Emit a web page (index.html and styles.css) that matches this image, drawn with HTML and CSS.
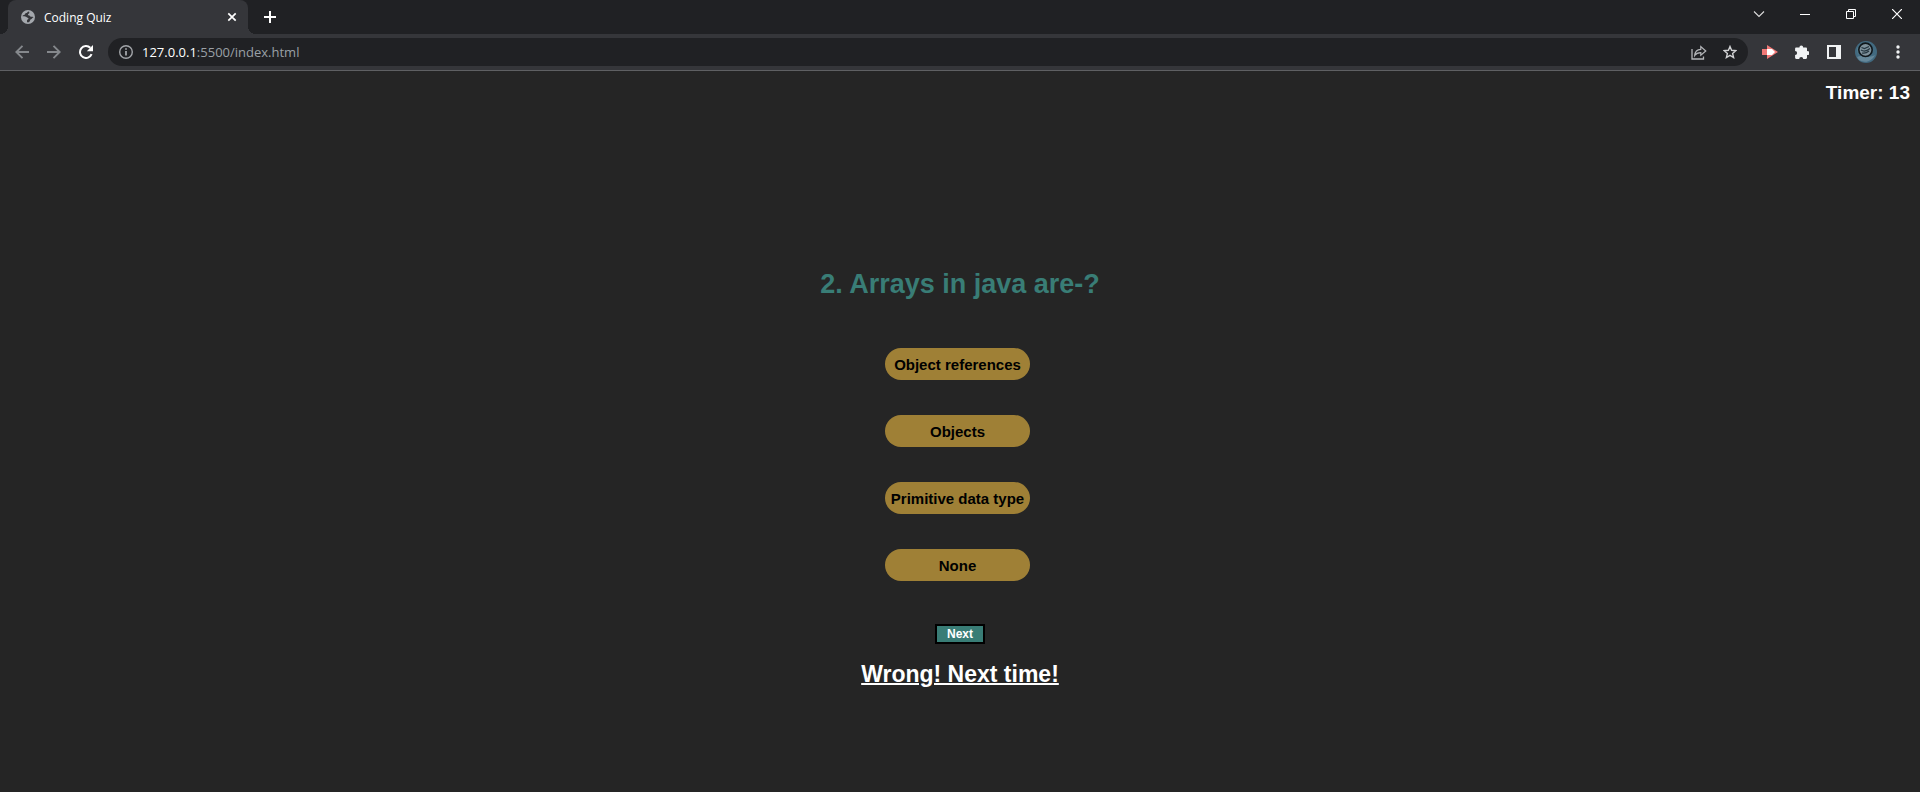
FILE: index.html
```html
<!DOCTYPE html>
<html lang="en">
<head>
<meta charset="utf-8">
<title>Coding Quiz</title>
<link rel="stylesheet" href="styles.css">
</head>
<body>
<header class="browser">
  <div class="tab-strip">
    <div class="tab">
      <svg class="globe" width="14" height="14" viewBox="0 0 14 14"><circle cx="7" cy="7" r="7" fill="#a4a8ad"/><path d="M8 1.4c-2 .2-1.6 1.6-3 1.7-1 .1-.5 1.5-1.5 1.7-.8.2-1.7.6-2 1.4 1.6-.1 3.3 0 4 .9.5.8 1.9.6 2 1.5 0 1-1.5.8-1.5 1.8v1.8c2.500.4 3-1.200 3.200-2.300.2-.9 1.300-.6 1.800-1.500.4-.8 1-.7 1.600-.9-.3-.9-1.300-.9-2.200-.8-1.300.1-1-1.100-2.300-1.300-1.200-.2-1.500-1.100-.6-1.700.8-.5 1.200-1.200.5-2.300z" fill="#35363a"/></svg>
      <span class="tab-title">Coding Quiz</span>
      <button class="icon-btn tab-close" aria-label="Close tab"><svg width="10" height="10" viewBox="0 0 10 10"><path d="M1.300 1.300l7.400 7.400M8.700 1.300L1.300 8.700" stroke="#fff" stroke-width="1.700"/></svg></button>
    </div>
    <button class="icon-btn new-tab" aria-label="New tab"><svg width="12" height="12" viewBox="0 0 12 12"><path d="M6 0v12M0 6h12" stroke="#fff" stroke-width="2"/></svg></button>
    <div class="window-controls">
      <button class="icon-btn" aria-label="Search tabs"><svg width="12" height="12" viewBox="0 0 12 12"><path d="M1 3.500l5 5 5-5" fill="none" stroke="#ddd" stroke-width="1.100"/></svg></button>
      <button class="icon-btn" aria-label="Minimize"><svg width="10" height="10" viewBox="0 0 10 10"><path d="M0 5.500h10" stroke="#fff"/></svg></button>
      <button class="icon-btn" aria-label="Restore"><svg width="10" height="10" viewBox="0 0 10 10"><path d="M.5 2.500h7v7h-7zM2.500 2.500v-2h7v7h-2" fill="none" stroke="#fff"/></svg></button>
      <button class="icon-btn" aria-label="Close"><svg width="10" height="10" viewBox="0 0 10 10"><path d="M0 0l10 10M10 0L0 10" stroke="#fff" stroke-width="1.200"/></svg></button>
    </div>
  </div>
  <div class="toolbar">
    <div class="nav-buttons">
      <button class="icon-btn" aria-label="Back"><svg width="14" height="14" viewBox="0 0 14 14"><path d="M14 7H1.500M7.500.8L1.300 7l6.200 6.200" fill="none" stroke="#85888c" stroke-width="1.900"/></svg></button>
      <button class="icon-btn" aria-label="Forward"><svg width="14" height="14" viewBox="0 0 14 14"><path d="M0 7h12.500M6.500.8L12.700 7l-6.200 6.200" fill="none" stroke="#85888c" stroke-width="1.900"/></svg></button>
      <button class="icon-btn" aria-label="Reload"><svg width="14" height="14" viewBox="0 0 14 14"><path d="M12.600 9.200A6 6 0 1 1 11.300 2.800" fill="none" stroke="#fff" stroke-width="2"/><path d="M14 0v6.200H7.800z" fill="#fff"/></svg></button>
    </div>
    <div class="omnibox">
      <svg width="14" height="14" viewBox="0 0 14 14"><circle cx="7" cy="7" r="6.300" fill="none" stroke="#a2a5a9" stroke-width="1.400"/><path d="M7 6v4.500M7 3.300v1.500" stroke="#a2a5a9" stroke-width="1.800"/></svg>
      <a class="url" href="#"><span class="host">127.0.0.1</span>:5500/index.html</a>
      <button class="icon-btn share" aria-label="Share"><svg width="16" height="15" viewBox="0 0 16 15"><path d="M1 4v10h11.500v-2.500" fill="none" stroke="#b4b6b9" stroke-width="1.300"/><path d="M3.700 10.500C4 6.500 6 4.500 9.800 4.300V1.500L14.800 6l-5 4.300V7.600C7 7.600 5.200 8.300 3.700 10.500z" fill="none" stroke="#b4b6b9" stroke-width="1.200"/></svg></button>
      <button class="icon-btn" aria-label="Bookmark"><svg width="14" height="14" viewBox="0 0 14 14"><path d="M7 1.500l1.600 3.800 4.200.4-3.200 2.700 1 4.100L7 10.300l-3.600 2.200 1-4.100-3.200-2.700 4.200-.4z" fill="none" stroke="#d1d2d4" stroke-width="1.400"/></svg></button>
    </div>
    <div class="extensions">
      <button class="icon-btn" aria-label="Extension"><svg width="16" height="14" viewBox="0 0 16 14"><path d="M0 4h5V0l11 7-11 7v-4H0z" fill="#f27977"/><path d="M5 4h5l3 3-3 3H5z" fill="#fff"/></svg></button>
      <button class="icon-btn" aria-label="Extensions"><svg width="14" height="14" viewBox="0 0 14 14"><path d="M1.300 2.400h3.100a1.900 1.900 0 1 1 3.800 0h2.600c.7 0 1.200.5 1.200 1.200v2.600a1.900 1.900 0 1 1 0 3.700v2.900c0 .7-.5 1.200-1.200 1.200H8.200a2 2 0 1 0-4 0H1.300C.6 14 .1 13.500.1 12.800V9.900a2 2 0 1 0 0-4V3.600c0-.7.5-1.200 1.200-1.200z" fill="#f1f3f4"/></svg></button>
      <button class="icon-btn" aria-label="Side panel"><svg width="14" height="14" viewBox="0 0 14 14"><path fill-rule="evenodd" d="M0 0h14v14H0zM2 2v10h7V2z" fill="#f1f3f4"/></svg></button>
      <button class="icon-btn" aria-label="Profile"><svg width="22" height="22" viewBox="0 0 22 22"><circle cx="11" cy="11" r="11" fill="#426a80"/><path d="M2 16c5-3 12 2 18-2a11 11 0 0 1-16 5z" fill="#658799"/><path d="M2 7l4-4 7-2-8 7-2 7z" fill="#527b8d"/><circle cx="10.500" cy="8.800" r="6.700" fill="#7e919b" stroke="#10171b" stroke-width="1.600"/><path d="M6.500 6.500l3 1 4.500-2M6 9c3 2 6 1 9-1.500M7 12c3 .7 5-.3 7-2" fill="none" stroke="#253640" stroke-width="1.200"/></svg></button>
      <button class="icon-btn" aria-label="Menu"><svg width="4" height="14" viewBox="0 0 4 14"><g fill="#f1f3f4"><circle cx="2" cy="2" r="1.700"/><circle cx="2" cy="7" r="1.700"/><circle cx="2" cy="12" r="1.700"/></g></svg></button>
    </div>
  </div>
</header>
<main class="page">
  <div class="timer">Timer: 13</div>
  <section class="quiz">
    <h1 class="question">2. Arrays in java are-?</h1>
    <div class="answers">
      <button class="answer">Object references</button>
      <button class="answer">Objects</button>
      <button class="answer">Primitive data type</button>
      <button class="answer">None</button>
    </div>
    <button class="next">Next</button>
    <p class="result">Wrong! Next time!</p>
  </section>
</main>
</body>
</html>
```

FILE: styles.css
```css
* {
  box-sizing: border-box;
}

body {
  margin: 0;
  min-height: 100vh;
  display: flex;
  flex-direction: column;
  background: #252525;
  color: #fff;
  font-family: "Franklin Gothic Medium", "Liberation Sans", Arial, sans-serif;
}

button {
  font-family: inherit;
  cursor: pointer;
}

svg {
  display: block;
  flex: none;
}

.browser {
  background: #35363a;
  border-bottom: 1px solid #5f6063;
  font-family: "Segoe UI", "Open Sans", sans-serif;
}

.icon-btn {
  display: grid;
  place-items: center;
  padding: 0;
  border: 0;
  background: none;
}

.tab-strip {
  display: flex;
  height: 34px;
  padding-left: 8px;
  background: #202124;
}

.tab {
  position: relative;
  display: flex;
  align-items: center;
  width: 240px;
  padding: 0 11px 0 13px;
  border-radius: 8px 8px 0 0;
  background: #35363a;
}

.tab::before,
.tab::after {
  content: "";
  position: absolute;
  bottom: 0;
  width: 8px;
  height: 8px;
}

.tab::before {
  right: 100%;
  background: radial-gradient(circle at 0 0, #202124 8px, #35363a 8px);
}

.tab::after {
  left: 100%;
  background: radial-gradient(circle at 100% 0, #202124 8px, #35363a 8px);
}

.tab-title {
  flex: 1;
  margin-left: 9px;
  font-size: 12px;
}

.new-tab {
  width: 44px;
}

.window-controls {
  display: flex;
  height: 28px;
  margin-left: auto;
}

.window-controls .icon-btn {
  width: 46px;
}

.toolbar {
  display: flex;
  align-items: center;
  height: 36px;
}

.nav-buttons {
  display: flex;
  gap: 18px;
  padding: 0 15px;
}

.omnibox {
  display: flex;
  flex: 1;
  align-items: center;
  height: 28px;
  padding: 0 11px;
  border-radius: 14px;
  background: #202124;
}

.url {
  margin-left: 9px;
  color: #9aa0a6;
  font-size: 13px;
  text-decoration: none;
}

.host {
  color: #fff;
}

.share {
  margin: 0 16px 0 auto;
}

.extensions {
  display: flex;
  align-items: center;
  padding: 0 6px;
}

.extensions .icon-btn {
  width: 32px;
}

.page {
  display: flex;
  flex: 1;
  flex-direction: column;
  font-weight: bold;
}

.timer {
  padding: 11px 10px 0;
  font-size: 19px;
  line-height: 22px;
  text-align: right;
}

.quiz {
  display: flex;
  flex-direction: column;
  align-items: center;
  padding-top: 164px;
}

.question {
  margin: 0 0 48px;
  color: #397d76;
  font-size: 27px;
  line-height: 32px;
}

.answers {
  display: grid;
  gap: 35px;
  margin: 0 5px 43px 0;
}

.answer {
  height: 32px;
  padding: 0 6px;
  border: 0;
  border-radius: 16px;
  background: #9f8036;
  color: #000;
  font-size: 15px;
  font-weight: bold;
}

.next {
  height: 20px;
  padding: 0 10px;
  border: 2px solid #000;
  background: #397d76;
  color: #fff;
  font-size: 12px;
  font-weight: bold;
  line-height: 14px;
}

.result {
  margin: 16px 0 0;
  font-size: 23px;
  line-height: 28px;
  text-decoration: underline;
  text-decoration-thickness: 2px;
}
```
